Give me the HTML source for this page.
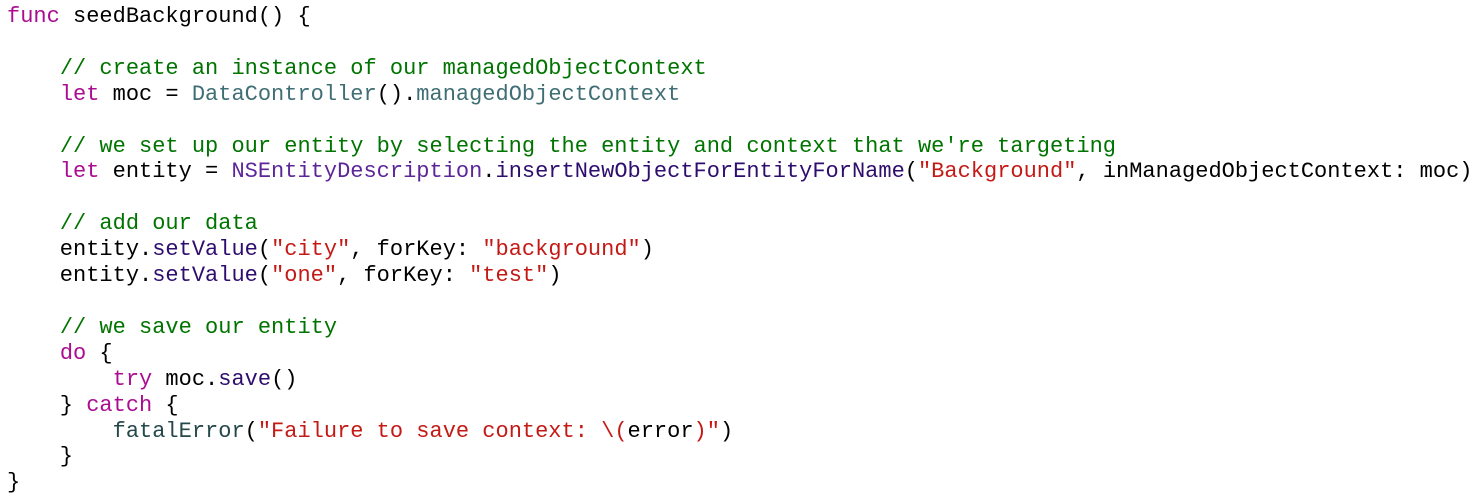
<!DOCTYPE html>
<html><head><meta charset="utf-8"><style>
html,body{margin:0;background:#fff;width:1480px;height:504px;overflow:hidden}
pre{margin:0;padding:4px 0 0 7px;font-family:"Liberation Mono",monospace;font-size:22px;line-height:25.9px;color:#000}
.k{color:#AA0D91}.c{color:#007400}.s{color:#C41A16}.p{color:#3F6E74}.y{color:#5C2699}.m{color:#2E0D6E}.f{color:#26474B}
</style></head><body><pre><span class="k">func</span> seedBackground() {

    <span class="c">// create an instance of our managedObjectContext</span>
    <span class="k">let</span> moc = <span class="p">DataController</span>().<span class="p">managedObjectContext</span>

    <span class="c">// we set up our entity by selecting the entity and context that we're targeting</span>
    <span class="k">let</span> entity = <span class="y">NSEntityDescription</span>.<span class="m">insertNewObjectForEntityForName</span>(<span class="s">"Background"</span>, inManagedObjectContext: moc)

    <span class="c">// add our data</span>
    entity.<span class="m">setValue</span>(<span class="s">"city"</span>, forKey: <span class="s">"background"</span>)
    entity.<span class="m">setValue</span>(<span class="s">"one"</span>, forKey: <span class="s">"test"</span>)

    <span class="c">// we save our entity</span>
    <span class="k">do</span> {
        <span class="k">try</span> moc.<span class="m">save</span>()
    } <span class="k">catch</span> {
        <span class="f">fatalError</span>(<span class="s">"Failure to save context: \(</span>error<span class="s">)"</span>)
    }
}</pre></body></html>
